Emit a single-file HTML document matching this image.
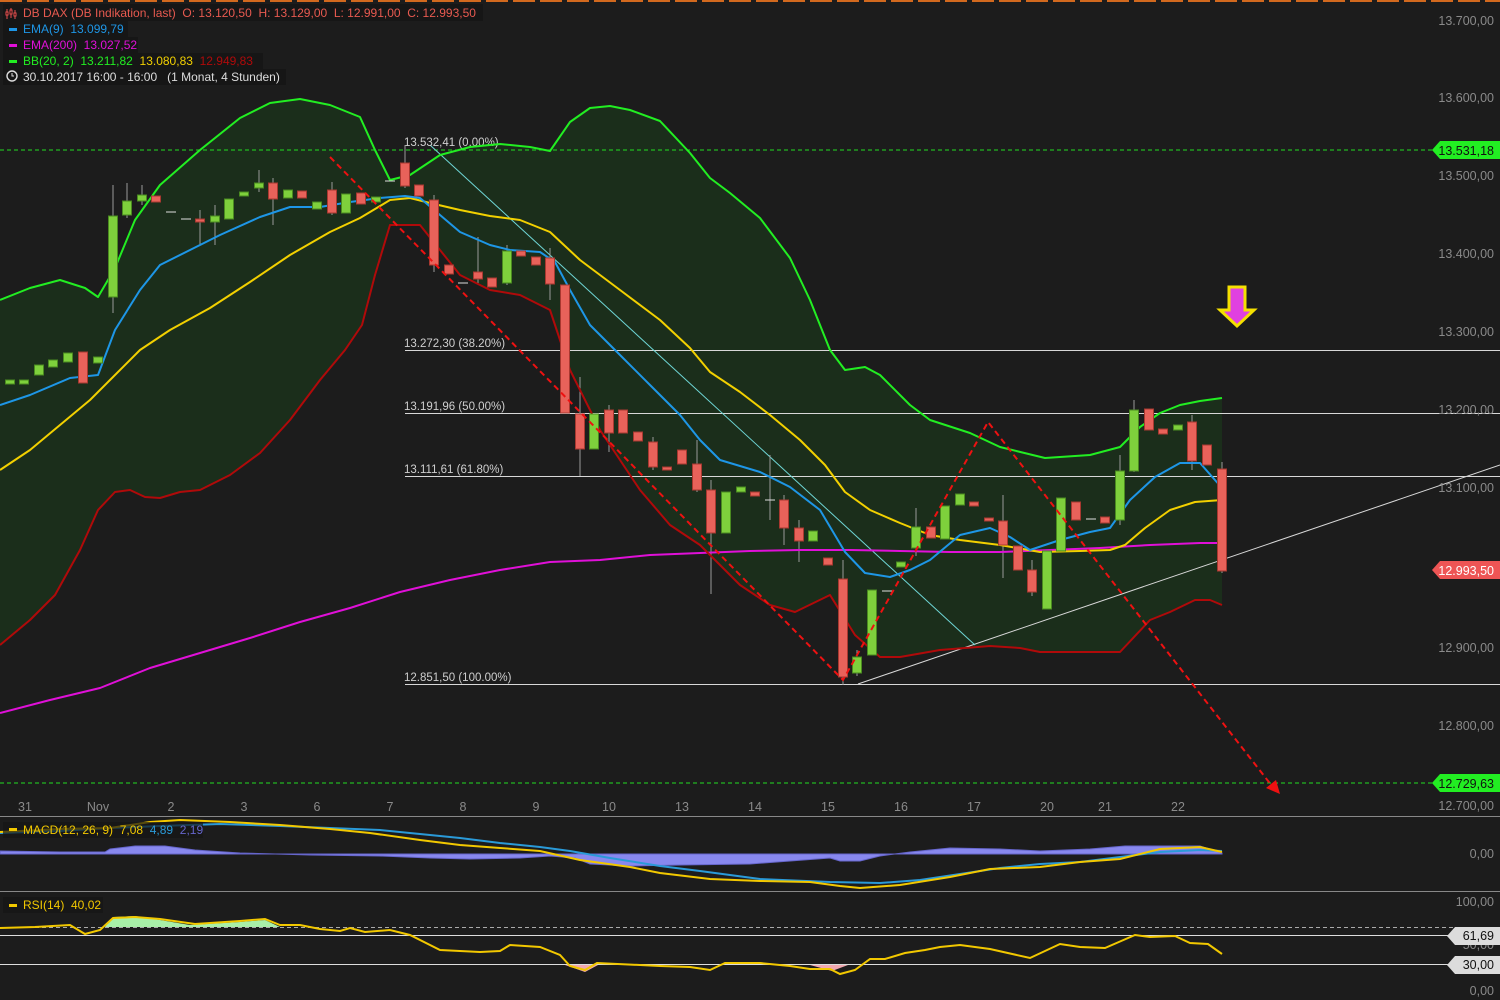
<!DOCTYPE html>
<html><head><meta charset="utf-8"><style>
html,body{margin:0;padding:0;background:#1c1c1c;width:1500px;height:1000px;overflow:hidden}
svg{display:block;font-family:"Liberation Sans",sans-serif}
text{white-space:pre}
.ax{fill:#8a8a8a;font-size:12.5px}
.fl{fill:#cfcfcf;font-size:11.5px}
.lg{font-size:12px}
</style></head><body>
<svg width="1500" height="1000" viewBox="0 0 1500 1000" xml:space="preserve">
<rect width="1500" height="1000" fill="#1c1c1c"/>
<line x1="0" y1="1" x2="1500" y2="1" stroke="#d2691e" stroke-width="2" stroke-dasharray="22 5"/>
<polygon fill="#1b2e1b" points="0,300 30,288 60,280 85,288 98,297 115,268 135,220 160,185 200,150 240,118 270,103 300,99 330,105 360,117 375,150 390,180 410,175 440,155 470,147 500,144 530,147 550,151 570,122 590,108 610,106 630,110 660,121 690,153 710,178 730,193 760,218 790,258 810,300 830,350 845,370 865,367 880,375 910,405 930,420 970,433 1000,447 1045,458 1090,455 1120,447 1140,427 1160,413 1180,405 1200,401 1222,398 1222,605 1210,600 1195,600 1170,612 1150,620 1120,652 1040,652 1020,648 990,646 940,650 900,657 880,657 855,635 830,595 795,612 770,605 740,585 700,545 670,525 640,490 600,430 570,370 550,310 520,295 490,290 460,275 440,250 420,225 390,225 375,275 362,325 345,350 320,380 290,420 260,453 230,475 200,490 180,492 160,498 145,497 130,490 115,492 98,510 80,550 55,595 30,620 0,645"/>
<line x1="0" y1="150" x2="1440" y2="150" stroke="#22dd22" stroke-dasharray="4 3"/>
<line x1="0" y1="783" x2="1440" y2="783" stroke="#22dd22" stroke-dasharray="4 3"/>
<g stroke="#d8d8d8" stroke-width="1">
<line x1="405" y1="350.5" x2="1500" y2="350.5"/>
<line x1="405" y1="413.5" x2="1500" y2="413.5"/>
<line x1="405" y1="476.5" x2="1500" y2="476.5"/>
<line x1="405" y1="684.5" x2="1500" y2="684.5"/>
<line x1="858" y1="684" x2="1500" y2="465"/>
</g>
<line x1="430" y1="145" x2="975" y2="645" stroke="#6fd6d6" stroke-width="1"/>
<g class="fl">
<text x="404" y="146">13.532,41 (0.00%)</text>
<text x="404" y="347">13.272,30 (38.20%)</text>
<text x="404" y="410">13.191,96 (50.00%)</text>
<text x="404" y="473">13.111,61 (61.80%)</text>
<text x="404" y="681">12.851,50 (100.00%)</text>
</g>
<!-- wicks -->
<g stroke="#9a9a9a" stroke-width="1">
<line x1="113" y1="185" x2="113" y2="313"/><line x1="127" y1="183" x2="127" y2="218"/><line x1="142" y1="185" x2="142" y2="205"/><line x1="200" y1="210" x2="200" y2="245"/><line x1="215" y1="205" x2="215" y2="245"/><line x1="259" y1="170" x2="259" y2="192"/><line x1="273" y1="178" x2="273" y2="225"/><line x1="332" y1="182" x2="332" y2="215"/><line x1="405" y1="145" x2="405" y2="188"/><line x1="434" y1="195" x2="434" y2="272"/><line x1="478" y1="237" x2="478" y2="283"/><line x1="507" y1="245" x2="507" y2="285"/><line x1="550" y1="248" x2="550" y2="300"/><line x1="580" y1="377" x2="580" y2="476"/><line x1="609" y1="405" x2="609" y2="452"/><line x1="653" y1="437" x2="653" y2="470"/><line x1="697" y1="440" x2="697" y2="492"/><line x1="711" y1="480" x2="711" y2="594"/><line x1="770" y1="455" x2="770" y2="520"/><line x1="784" y1="495" x2="784" y2="545"/><line x1="799" y1="520" x2="799" y2="562"/><line x1="843" y1="560" x2="843" y2="685"/><line x1="857" y1="650" x2="857" y2="676"/><line x1="916" y1="508" x2="916" y2="556"/><line x1="1003" y1="495" x2="1003" y2="578"/><line x1="1032" y1="560" x2="1032" y2="596"/><line x1="1120" y1="455" x2="1120" y2="525"/><line x1="1134" y1="400" x2="1134" y2="472"/><line x1="1192" y1="415" x2="1192" y2="470"/><line x1="1222" y1="462" x2="1222" y2="573"/>
</g>
<g fill="none" stroke-width="2" stroke-linejoin="round">
<polyline stroke="#e010d8" points="0,713 50,700 100,688 150,668 200,653 250,638 300,622 350,608 400,592 450,580 500,570 550,562 600,560 650,555 700,553 750,551 800,550 850,550 900,551 950,552 1000,552 1050,550 1100,548 1150,545 1200,543 1222,543"/>
<polyline stroke="#b00a0a" points="0,645 30,620 55,595 80,550 98,510 115,492 130,490 145,497 160,498 180,492 200,490 230,475 260,453 290,420 320,380 345,350 362,325 375,275 390,225 420,225 440,250 460,275 490,290 520,295 550,310 570,370 600,430 640,490 670,525 700,545 740,585 770,605 795,612 830,595 855,635 880,657 900,657 940,650 990,646 1020,648 1040,652 1120,652 1150,620 1170,612 1195,600 1210,600 1222,605"/>
<polyline stroke="#22ee22" points="0,300 30,288 60,280 85,288 98,297 115,268 135,220 160,185 200,150 240,118 270,103 300,99 330,105 360,117 375,150 390,180 410,175 440,155 470,147 500,144 530,147 550,151 570,122 590,108 610,106 630,110 660,121 690,153 710,178 730,193 760,218 790,258 810,300 830,350 845,370 865,367 880,375 910,405 930,420 970,433 1000,447 1045,458 1090,455 1120,447 1140,427 1160,413 1180,405 1200,401 1222,398"/>
<polyline stroke="#f2d000" points="0,470 30,450 60,425 90,400 110,380 140,350 170,330 210,308 250,282 290,255 330,232 360,218 390,200 410,198 430,203 460,210 490,216 520,220 550,232 580,260 620,290 660,320 690,348 710,372 740,392 770,415 800,440 825,465 845,492 870,510 900,523 930,535 960,540 1000,545 1040,552 1080,551 1110,550 1125,545 1145,528 1170,510 1195,502 1222,500"/>
<polyline stroke="#1e96e6" points="0,405 30,395 70,378 98,375 115,330 140,290 160,265 190,250 220,235 260,217 290,207 320,207 350,202 380,198 405,196 420,198 440,215 460,232 490,245 510,250 540,252 555,262 570,290 590,325 620,355 650,385 680,415 700,440 720,460 760,472 790,487 820,510 845,552 865,573 890,577 910,570 930,560 960,535 990,528 1010,537 1030,550 1060,540 1090,532 1110,528 1130,500 1155,477 1180,463 1200,463 1222,488"/>
</g>
<g stroke-width="1">
<g fill="#7ed03c" stroke="#4a8a20">
<rect x="5.5" y="380" width="9" height="4"/><rect x="19.5" y="380" width="9" height="4"/><rect x="34.5" y="365" width="9" height="10"/><rect x="48.5" y="360" width="9" height="7"/><rect x="63.5" y="353" width="9" height="9"/><rect x="93.5" y="357" width="9" height="6"/><rect x="108.5" y="216" width="9" height="81"/><rect x="122.5" y="201" width="9" height="14"/><rect x="137.5" y="195" width="9" height="6"/><rect x="210.5" y="216" width="9" height="6"/><rect x="224.5" y="199" width="9" height="20"/><rect x="239.5" y="192" width="9" height="4"/><rect x="254.5" y="183" width="9" height="5"/><rect x="283.5" y="190" width="9" height="8"/><rect x="312.5" y="202" width="9" height="7"/><rect x="341.5" y="194" width="9" height="19"/><rect x="371.5" y="197" width="9" height="5"/><rect x="502.5" y="251" width="9" height="32"/><rect x="589.5" y="414" width="9" height="35"/><rect x="721.5" y="492" width="9" height="41"/><rect x="736.5" y="487" width="9" height="5"/><rect x="808.5" y="531" width="9" height="10"/><rect x="852.5" y="657" width="9" height="16"/><rect x="867.5" y="590" width="9" height="65"/><rect x="896.5" y="562" width="9" height="5"/><rect x="911.5" y="527" width="9" height="21"/><rect x="940.5" y="506" width="9" height="33"/><rect x="955.5" y="494" width="9" height="11"/><rect x="1042.5" y="551" width="9" height="58"/><rect x="1056.5" y="498" width="9" height="53"/><rect x="1115.5" y="471" width="9" height="49"/><rect x="1129.5" y="410" width="9" height="61"/><rect x="1173.5" y="425" width="9" height="5"/>
</g>
<g fill="#e8625a" stroke="#a83830">
<rect x="78.5" y="352" width="9" height="31"/><rect x="151.5" y="196" width="9" height="6"/><rect x="195.5" y="219" width="9" height="3"/><rect x="268.5" y="183" width="9" height="16"/><rect x="297.5" y="191" width="9" height="7"/><rect x="327.5" y="190" width="9" height="23"/><rect x="356.5" y="193" width="9" height="11"/><rect x="400.5" y="163" width="9" height="23"/><rect x="414.5" y="185" width="9" height="11"/><rect x="429.5" y="200" width="9" height="65"/><rect x="444.5" y="265" width="9" height="9"/><rect x="473.5" y="272" width="9" height="7"/><rect x="487.5" y="278" width="9" height="9"/><rect x="516.5" y="251" width="9" height="5"/><rect x="531.5" y="257" width="9" height="8"/><rect x="545.5" y="258" width="9" height="26"/><rect x="560.5" y="285" width="9" height="128"/><rect x="575.5" y="414" width="9" height="35"/><rect x="604.5" y="410" width="9" height="23"/><rect x="618.5" y="410" width="9" height="23"/><rect x="633.5" y="432" width="9" height="9"/><rect x="648.5" y="442" width="9" height="25"/><rect x="662.5" y="467" width="9" height="3"/><rect x="677.5" y="450" width="9" height="14"/><rect x="692.5" y="464" width="9" height="26"/><rect x="706.5" y="490" width="9" height="43"/><rect x="750.5" y="492" width="9" height="4"/><rect x="779.5" y="500" width="9" height="28"/><rect x="794.5" y="528" width="9" height="13"/><rect x="823.5" y="558" width="9" height="7"/><rect x="838.5" y="579" width="9" height="98"/><rect x="926.5" y="527" width="9" height="11"/><rect x="969.5" y="502" width="9" height="4"/><rect x="984.5" y="518" width="9" height="3"/><rect x="998.5" y="521" width="9" height="24"/><rect x="1013.5" y="546" width="9" height="24"/><rect x="1027.5" y="570" width="9" height="22"/><rect x="1071.5" y="502" width="9" height="18"/><rect x="1100.5" y="517" width="9" height="6"/><rect x="1144.5" y="409" width="9" height="21"/><rect x="1158.5" y="429" width="9" height="5"/><rect x="1187.5" y="422" width="9" height="39"/><rect x="1202.5" y="445" width="9" height="20"/><rect x="1217.5" y="469" width="9" height="102"/>
</g>
<g stroke="#ddd"><line x1="166" y1="212" x2="176" y2="212"/><line x1="181" y1="219" x2="191" y2="219"/><line x1="385" y1="181" x2="395" y2="181"/><line x1="458" y1="283" x2="468" y2="283"/><line x1="765" y1="500" x2="775" y2="500"/><line x1="882" y1="591" x2="892" y2="591"/><line x1="1086" y1="519" x2="1096" y2="519"/></g>
</g>
<polyline fill="none" stroke="#ee1111" stroke-width="2" stroke-dasharray="6 4" points="330,157 843,680 988,422 1272,786"/>
<polygon fill="#ee1111" points="1280,794 1266,788 1276,780"/>
<polygon fill="#e040e0" stroke="#f5e000" stroke-width="3" points="1229,287 1245,287 1245,310 1254,310 1237,326 1220,310 1229,310"/>
<g class="lg">
<rect x="3" y="4" width="480" height="17" fill="#161616"/>
<g stroke="#e85050" stroke-width="1"><line x1="7" y1="9" x2="7" y2="19"/><line x1="11" y1="8" x2="11" y2="18"/><line x1="15" y1="10" x2="15" y2="19"/><rect x="6" y="12" width="2" height="3"/><rect x="10" y="10" width="2" height="4"/><rect x="14" y="13" width="2" height="3"/></g>
<text x="23" y="17" fill="#e85a50">DB DAX (DB Indikation, last)  O: 13.120,50  H: 13.129,00  L: 12.991,00  C: 12.993,50</text>
<rect x="3" y="21" width="125" height="16" fill="#161616"/>
<rect x="9" y="28" width="8" height="3" fill="#1e96e6"/><text x="23" y="33" fill="#1e96e6">EMA(9)  13.099,79</text>
<rect x="3" y="37" width="135" height="16" fill="#161616"/>
<rect x="9" y="44" width="8" height="3" fill="#e010d8"/><text x="23" y="49" fill="#e010d8">EMA(200)  13.027,52</text>
<rect x="3" y="53" width="260" height="16" fill="#161616"/>
<rect x="9" y="60" width="8" height="3" fill="#22ee22"/><text x="23" y="65" fill="#22ee22">BB(20, 2)  13.211,82  <tspan fill="#f2d000">13.080,83</tspan>  <tspan fill="#b00a0a">12.949,83</tspan></text>
<rect x="3" y="69" width="283" height="16" fill="#161616"/>
<circle cx="12" cy="76" r="5" fill="none" stroke="#ddd" stroke-width="1.4"/><path d="M12 73v3h2" stroke="#ddd" fill="none"/>
<text x="23" y="81" fill="#ddd">30.10.2017 16:00 - 16:00   (1 Monat, 4 Stunden)</text>
</g>
<g class="ax" text-anchor="end">
<text x="1494" y="25">13.700,00</text><text x="1494" y="102">13.600,00</text><text x="1494" y="180">13.500,00</text><text x="1494" y="258">13.400,00</text><text x="1494" y="336">13.300,00</text><text x="1494" y="414">13.200,00</text><text x="1494" y="492">13.100,00</text><text x="1494" y="652">12.900,00</text><text x="1494" y="730">12.800,00</text><text x="1494" y="810">12.700,00</text>
<text x="1494" y="858">0,00</text><text x="1494" y="906">100,00</text><text x="1494" y="949">50,00</text><text x="1494" y="995">0,00</text>
</g>
<polygon fill="#22ee22" points="1440,141 1500,141 1500,159 1440,159 1432,150"/>
<text x="1494" y="155" text-anchor="end" font-size="12.5" fill="#111">13.531,18</text>
<polygon fill="#ee5555" points="1440,561 1500,561 1500,579 1440,579 1432,570"/>
<text x="1494" y="575" text-anchor="end" font-size="12.5" fill="#fff">12.993,50</text>
<polygon fill="#22ee22" points="1440,774 1500,774 1500,792 1440,792 1432,783"/>
<text x="1494" y="788" text-anchor="end" font-size="12.5" fill="#111">12.729,63</text>
<g class="ax" text-anchor="middle">
<text x="25" y="811">31</text><text x="98" y="811">Nov</text><text x="171" y="811">2</text><text x="244" y="811">3</text><text x="317" y="811">6</text><text x="390" y="811">7</text><text x="463" y="811">8</text><text x="536" y="811">9</text><text x="609" y="811">10</text><text x="682" y="811">13</text><text x="755" y="811">14</text><text x="828" y="811">15</text><text x="901" y="811">16</text><text x="974" y="811">17</text><text x="1047" y="811">20</text><text x="1105" y="811">21</text><text x="1178" y="811">22</text>
</g>
<line x1="0" y1="816.5" x2="1500" y2="816.5" stroke="#888"/>
<line x1="0" y1="891.5" x2="1500" y2="891.5" stroke="#888"/>
<polygon fill="#8888ee" stroke="#6666cc" points="0,851 60,852 105,852 110,849 135,846 165,846 195,850 240,853 310,855 380,856 430,858 470,859 520,858 550,856 575,858 590,864 630,866 680,865 750,864 830,858 840,861 860,861 880,856 910,852 950,848 1000,849 1040,851 1090,849 1125,846 1200,846 1222,853 1222,854 0,854"/>
<polyline fill="none" stroke="#2a9ad8" stroke-width="2" points="0,833 60,831 110,828 160,826 220,824 280,826 330,828 380,830 420,834 460,838 500,843 540,847 570,851 610,858 660,866 700,871 760,879 830,882 880,883 920,880 960,874 1000,868 1040,864 1080,862 1120,857 1160,852 1200,850 1222,851"/>
<polyline fill="none" stroke="#f2c800" stroke-width="2" points="0,832 60,829 110,828 150,822 180,820 230,822 280,825 330,829 370,833 420,840 460,845 500,848 540,851 580,860 630,867 660,873 710,879 760,881 810,882 840,886 860,888 900,885 950,877 990,869 1040,867 1080,862 1120,859 1160,849 1200,847 1222,852"/>
<rect x="3" y="822" width="200" height="16" fill="#161616" opacity=".7"/>
<rect x="9" y="828" width="8" height="3" fill="#f2c800"/>
<text x="23" y="834" class="lg" fill="#f2c800">MACD(12, 26, 9)  7,08  <tspan fill="#2a9ad8">4,89</tspan>  <tspan fill="#6666cc">2,19</tspan></text>
<line x1="0" y1="927.5" x2="1500" y2="927.5" stroke="#aaa" stroke-dasharray="4 3"/>
<line x1="0" y1="935.5" x2="1500" y2="935.5" stroke="#ddd"/>
<line x1="0" y1="964.5" x2="1500" y2="964.5" stroke="#ddd"/>
<polygon fill="#a8f0a8" points="105,927 113,917 135,916 160,920 190,925 240,922 265,920 280,927"/>
<polygon fill="#f0a8b0" points="565,965 585,972 598,965"/>
<polygon fill="#f0a8b0" points="810,965 832,971 848,965"/>
<polyline fill="none" stroke="#f2c800" stroke-width="2" points="0,928 35,927 70,925 85,934 100,930 113,918 135,917 160,919 195,924 240,921 265,919 280,925 300,925 320,929 340,931 350,928 365,932 390,930 410,935 440,950 480,952 500,951 510,945 540,947 560,955 570,966 585,970 597,963 660,966 690,967 710,970 725,963 760,963 790,966 810,969 830,969 840,974 855,970 870,959 885,959 905,953 925,950 940,947 960,945 990,949 1030,958 1060,944 1080,947 1105,948 1135,935 1150,937 1175,936 1190,943 1208,944 1222,954"/>
<rect x="3" y="897" width="100" height="16" fill="#161616" opacity=".7"/>
<rect x="9" y="904" width="8" height="3" fill="#f2c800"/>
<text x="23" y="909" class="lg" fill="#f2c800">RSI(14)  40,02</text>
<polygon fill="#dcdcdc" points="1455,927 1500,927 1500,945 1455,945 1447,936"/>
<text x="1494" y="940" text-anchor="end" font-size="12.5" fill="#111">61,69</text>
<polygon fill="#dcdcdc" points="1455,956 1500,956 1500,974 1455,974 1447,965"/>
<text x="1494" y="969" text-anchor="end" font-size="12.5" fill="#111">30,00</text>
</svg>
</body></html>
